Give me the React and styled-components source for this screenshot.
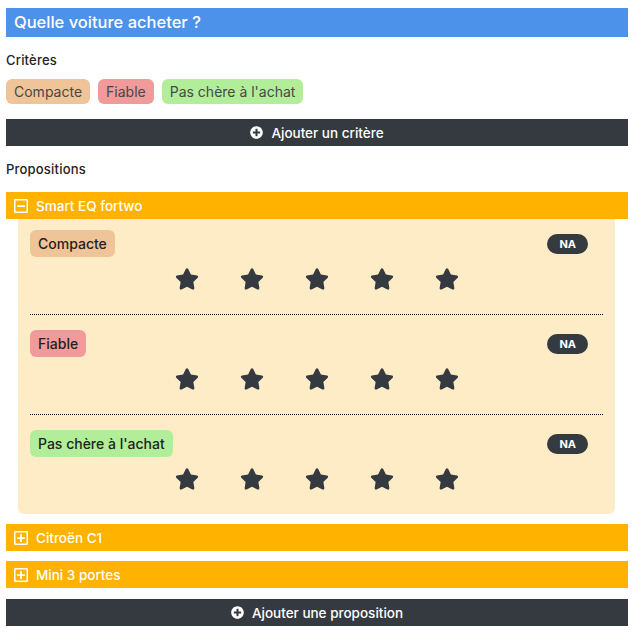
import React, { useState } from 'react'
import styled, { createGlobalStyle } from 'styled-components'
import { FaStar, FaPlusCircle, FaRegMinusSquare, FaRegPlusSquare } from 'react-icons/fa'

const criteria = [
  { id: 1, label: `Compacte`, color: `#f0c499` },
  { id: 2, label: `Fiable`, color: `#f09a9a` },
  { id: 3, label: `Pas chère à l'achat`, color: `#b2ee99` },
]

const cars = [
  { id: 1, name: `Smart EQ fortwo` },
  { id: 2, name: `Citroën C1` },
  { id: 3, name: `Mini 3 portes` },
]

export default function App() {
  const [open, setOpen] = useState(1)
  return (
    <Page>
      <GlobalStyle />
      <Title>Quelle voiture acheter ?</Title>
      <SectionLabel>Critères</SectionLabel>
      <ChipRow>
        {criteria.map(c => (
          <Chip key={c.id} color={c.color}>
            {c.label}
          </Chip>
        ))}
      </ChipRow>
      <DarkButton>
        <FaPlusCircle size={13} />
        Ajouter un critère
      </DarkButton>
      <SectionLabel>Propositions</SectionLabel>
      <CarList>
        {cars.map(car => (
          <Car key={car.id}>
            <CarHeader onClick={() => setOpen(open === car.id ? null : car.id)}>
              {open === car.id ? <FaRegMinusSquare size={16} /> : <FaRegPlusSquare size={16} />}
              {car.name}
            </CarHeader>
            {open === car.id && (
              <Panel>
                {criteria.map(c => (
                  <Rating key={c.id}>
                    <RatingHead>
                      <Chip color={c.color} dark>
                        {c.label}
                      </Chip>
                      <Badge>NA</Badge>
                    </RatingHead>
                    <Stars>
                      {[1, 2, 3, 4, 5].map(n => (
                        <FaStar key={n} size={24} />
                      ))}
                    </Stars>
                  </Rating>
                ))}
              </Panel>
            )}
          </Car>
        ))}
      </CarList>
      <DarkButton>
        <FaPlusCircle size={13} />
        Ajouter une proposition
      </DarkButton>
    </Page>
  )
}

const GlobalStyle = createGlobalStyle`
  body {
    margin: 0;
    background: #fff;
    font-family: Inter, "Open Sans", "Liberation Sans", sans-serif;
    color: #212529;
  }
`

const Page = styled.div`
  display: flex;
  flex-direction: column;
  padding: 8px 9px 10px 6px;
`

const Title = styled.h1`
  margin: 0;
  height: 29px;
  padding: 0 8px;
  background: #4d92ea;
  color: #fff;
  font-size: 16.5px;
  font-weight: 500;
  line-height: 29px;
`

const SectionLabel = styled.div`
  padding: 13px 0 9px;
  font-size: 13px;
  font-weight: 500;
  line-height: 20px;
  letter-spacing: 0.2px;
  color: #222;
`

const ChipRow = styled.div`
  display: flex;
  gap: 8px;
`

const Chip = styled.span`
  display: inline-flex;
  align-items: center;
  height: ${p => (p.dark ? 27 : 25)}px;
  padding: 0 8px;
  border-radius: 6px;
  background: ${p => p.color};
  color: ${p => (p.dark ? `#222` : `#484848`)};
  font-size: 14px;
  font-weight: ${p => (p.dark ? 500 : 400)};
`

const DarkButton = styled.button`
  display: flex;
  align-items: center;
  justify-content: center;
  gap: 8px;
  height: 27px;
  margin-top: 15px;
  border: 0;
  background: #343a40;
  color: #fff;
  font: 500 13.5px Inter, "Open Sans", sans-serif;
  cursor: pointer;
`

const CarList = styled.div`
  display: flex;
  flex-direction: column;
  gap: 10px;
  margin-top: 4px;
  & + ${DarkButton} {
    margin-top: 11px;
  }
`

const Car = styled.div`
  display: flex;
  flex-direction: column;
`

const CarHeader = styled.div`
  display: flex;
  align-items: center;
  gap: 7px;
  height: 27px;
  padding: 0 7px;
  background: #ffb200;
  color: #fff;
  font-size: 13.5px;
  font-weight: 500;
  cursor: pointer;
`

const Panel = styled.div`
  margin: 0 13px 0 12px;
  padding: 11px 12px 0;
  background: #feecc7;
  border-radius: 0 0 6px 6px;
`

const Rating = styled.div`
  padding-bottom: 23px;
  border-bottom: 1px dotted #000;
  & + & {
    padding-top: 15px;
  }
  &:last-child {
    border-bottom: 0;
  }
`

const RatingHead = styled.div`
  display: flex;
  align-items: center;
  justify-content: space-between;
`

const Badge = styled.span`
  margin-right: 15px;
  padding: 0 12px;
  height: 20px;
  line-height: 20px;
  border-radius: 10px;
  background: #343a40;
  color: #fff;
  font-size: 11px;
  font-weight: 700;
`

const Stars = styled.div`
  display: flex;
  justify-content: center;
  gap: 41px;
  margin-top: 10px;
  color: #343a40;
  & svg {
    display: block;
  }
`
